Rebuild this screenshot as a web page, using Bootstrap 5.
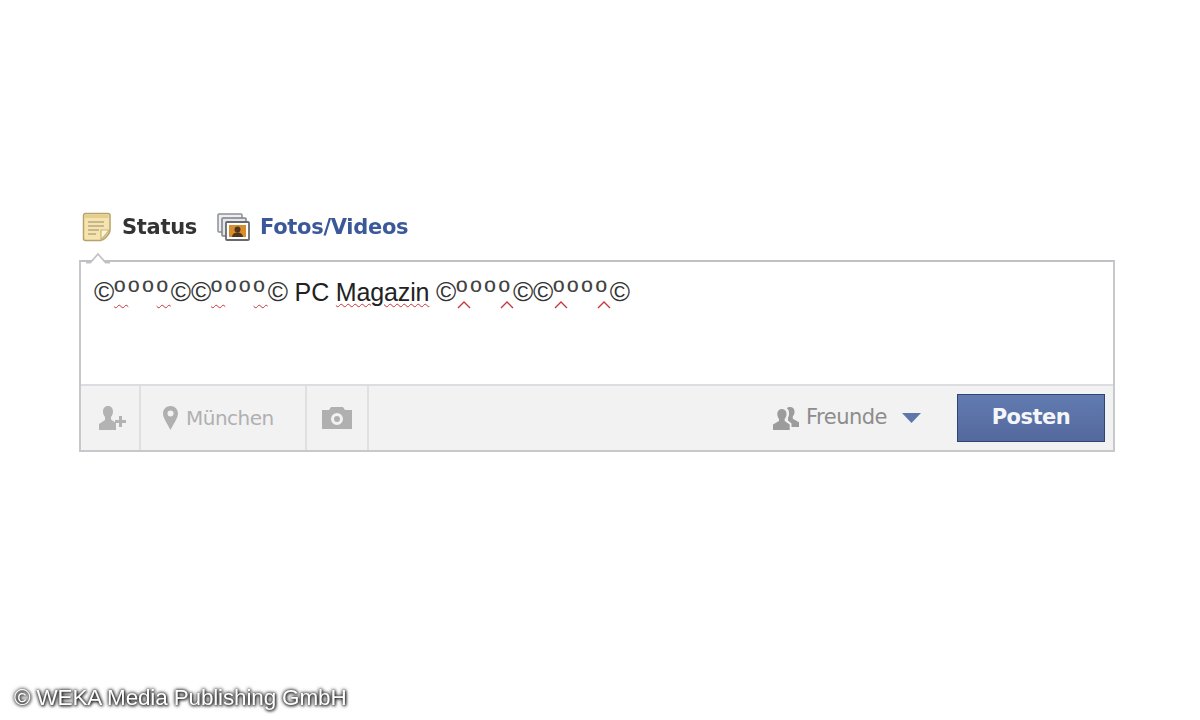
<!DOCTYPE html>
<html lang="de">
<head>
<meta charset="utf-8">
<title>Status</title>
<link href="https://cdn.jsdelivr.net/npm/bootstrap@5.3.0/dist/css/bootstrap.min.css" rel="stylesheet">
<style>
html,body{height:720px;overflow:hidden}
body{background:#fff;font-family:"Liberation Sans",Arial,sans-serif;color:#222}
.stage{padding:210px 85px 0 79px;height:720px;filter:blur(.45px)}
.tabs-row{height:34px;padding-left:3px;gap:20px;margin-bottom:16px}
.tab-item{gap:10px;font-family:"DejaVu Sans",sans-serif;font-weight:700;font-size:21px;letter-spacing:-.3px;line-height:32px}
.tab-status{color:#333}
.tab-photo{color:#3b5998;gap:9px}
.composer{position:relative;border:2px solid #c6c8cc;border-top-color:#bfc1c5;background:#fff;height:192px}
.notch{position:absolute;left:5px;top:-10px}
.msg{height:122px;padding:11px 13px 0;font-size:25px;line-height:36px;color:#222;white-space:nowrap;letter-spacing:-.15px}
.wavy{text-decoration:underline wavy #c8353a 1.4px;text-underline-offset:2px}
.cr{color:#333;font-size:27.5px}
.ord{font-size:30px;font-weight:400;line-height:0;letter-spacing:3.2px;color:#444;position:relative;top:1px}
.ord.wavy{text-underline-offset:2px}
.hat{position:relative;display:inline-block;line-height:36px}
.hat svg{position:absolute;left:1px;top:27px}
.bar{height:66px;background:#f2f2f2;border-top:2px solid #dcdde0;padding-right:8px}
.cell{height:100%;border-right:2px solid #e0e0e0;font-family:"DejaVu Sans",sans-serif;color:#b0b0b0}
.cell-person{width:60px;padding-left:3px}
.cell-place{width:166px;padding-left:21px;gap:7px;font-size:20px;letter-spacing:-.5px}
.cell-cam{width:62px}
.audience{gap:7px;font-family:"DejaVu Sans",sans-serif;font-size:21px;letter-spacing:-.5px;color:#8d8d8d;margin-right:36px}
.post-btn{width:148px;height:48px;background:#5b74a8;background-image:linear-gradient(#617bb0,#54699d);border:1px solid #2f4475;border-radius:0;color:#f4f6fa;font-family:"DejaVu Sans",sans-serif;font-weight:700;font-size:21px;letter-spacing:-.5px;padding:0}
.post-btn:hover{background:#54699d;color:#fff;border-color:#2f4475}
.watermark{position:absolute;left:14px;bottom:9px;font-size:22.5px;line-height:26px;color:#fff;text-shadow:0 0 3px #222,0 0 4px #222,1px 1px 3px #333;white-space:nowrap;letter-spacing:-.15px}
</style>
</head>
<body>
<main class="stage">
  <div class="d-flex align-items-center tabs-row">
    <div class="d-flex align-items-center tab-item tab-status">
      <svg width="30" height="30" viewBox="0 0 30 30"><path d="M3.500 1.500H26a2 2 0 0 1 2 2V18c0 4-6 10.500-10 10.500H3.500a2 2 0 0 1-2-2V3.500a2 2 0 0 1 2-2Z" fill="#f5e4ae" stroke="#b9a269" stroke-width="1.500"/><path d="M3 3H26.500V6H3Z" fill="#e4cf90"/><path d="M6 10H22M6 14H22M6 18H17M6 22H14" stroke="#b7a884" stroke-width="1.600"/><path d="M27.500 18H19V28Z" fill="#fff6d8" stroke="#c9b47d" stroke-width="1.200"/></svg>
      <span>Status</span>
    </div>
    <div class="d-flex align-items-center tab-item tab-photo">
      <svg width="34" height="30" viewBox="0 0 34 30"><rect x="1" y="2" width="24" height="18" rx="1" fill="#eceef1" stroke="#8d9095" stroke-width="1.500"/><rect x="5" y="6" width="24" height="18" rx="1" fill="#e4e6ea" stroke="#7d8085" stroke-width="1.500"/><rect x="9" y="10" width="23" height="18" rx="1" fill="#fff" stroke="#666a70" stroke-width="1.800"/><rect x="12" y="13" width="17" height="12" fill="#d98c2c"/><circle cx="20.500" cy="17.500" r="3" fill="#4f351d"/><path d="M15 25c.5-3.500 3-4.500 5.500-4.500s5 1 5.500 4.500Z" fill="#4f351d"/></svg>
      <span>Fotos/Videos</span>
    </div>
  </div>
  <section class="composer">
    <svg class="notch" width="24" height="12" viewBox="0 0 24 12"><path d="M0 11H4L12 2L20 11H24" fill="#fff" stroke="#c0c2c6" stroke-width="1.800"/><path d="M0 12H24V11.500H0Z" fill="#fff"/></svg>
    <div class="msg"><span class="cr">©</span><span class="wavy ord">º</span><span class="ord">ºº</span><span class="wavy ord">º</span><span class="cr">©©</span><span class="wavy ord">º</span><span class="ord">ºº</span><span class="wavy ord">º</span><span class="cr">©</span> PC <span class="wavy">Magazin</span> <span class="cr">©</span><span class="ord hat">º<svg width="14" height="8" viewBox="0 0 14 8"><path d="M1 7L7 1L13 7" fill="none" stroke="#c8353a" stroke-width="1.300"/></svg></span><span class="ord">ºº</span><span class="ord hat">º<svg width="14" height="8" viewBox="0 0 14 8"><path d="M1 7L7 1L13 7" fill="none" stroke="#c8353a" stroke-width="1.300"/></svg></span><span class="cr">©©</span><span class="ord hat">º<svg width="14" height="8" viewBox="0 0 14 8"><path d="M1 7L7 1L13 7" fill="none" stroke="#c8353a" stroke-width="1.300"/></svg></span><span class="ord">ºº</span><span class="ord hat">º<svg width="14" height="8" viewBox="0 0 14 8"><path d="M1 7L7 1L13 7" fill="none" stroke="#c8353a" stroke-width="1.300"/></svg></span><span class="cr">©</span></div>
    <div class="d-flex align-items-center bar">
      <div class="d-flex align-items-center justify-content-center cell cell-person">
        <svg width="28" height="26" viewBox="0 0 28 26" fill="#b3b3b3"><path d="M10 1c3.500 0 5 2.500 5 5.500 0 2.500-1 4.500-2 5.500v2.500l5 3.500V25H1v-6l6-4v-3C6 11 5 9 5 6.500 5 3.500 6.500 1 10 1Z"/><path d="M21 11h3v4h4v3h-4v4h-3v-4h-4v-3h4Z"/></svg>
      </div>
      <div class="d-flex align-items-center cell cell-place">
        <svg width="17" height="26" viewBox="0 0 17 26"><path fill-rule="evenodd" fill="#b0b0b0" d="M8.500 1C12.800 1 16 4.200 16 8.500 16 13 11.500 19 8.500 25 5.500 19 1 13 1 8.500 1 4.200 4.200 1 8.500 1ZM8.500 5.500a3 3 0 1 0 0 6 3 3 0 0 0 0-6Z"/></svg>
        <span>München</span>
      </div>
      <div class="d-flex align-items-center justify-content-center cell cell-cam">
        <svg width="32" height="24" viewBox="0 0 32 24"><path fill-rule="evenodd" fill="#b0b0b0" d="M10 1H22L24 4H31V23H1V4H8ZM16 7a6 6 0 1 0 0 12 6 6 0 0 0 0-12ZM16 10a3 3 0 1 1 0 6 3 3 0 0 1 0-6Z"/></svg>
      </div>
      <div class="d-flex align-items-center ms-auto audience">
        <svg width="26" height="24" viewBox="0 0 26 24" fill="#9c9c9c"><path d="M9 3c3 0 4.500 2.200 4.500 5 0 2-.8 3.800-1.800 4.800V15l5 3.500V24H0v-5.500l6-3.500v-2.200C5 11.800 4.300 10 4.300 8 4.300 5.200 6 3 9 3Z"/><path d="M17 1c3 0 4.500 2 4.500 4.800 0 2-.8 3.500-1.700 4.500v2.400l6.200 3.500V21h-7.500v-3.500L15 14.500v-3c1-1.200 1.200-3 1-5 0-2-1-3.500-2.200-4.300C14.500 1.500 15.700 1 17 1Z"/></svg>
        <span>Freunde</span>
        <svg class="ms-2" width="19" height="10" viewBox="0 0 19 10"><path d="M0 0H19L9.500 10Z" fill="#5e77a9"/></svg>
      </div>
      <button type="button" class="btn post-btn">Posten</button>
    </div>
  </section>
</main>
<div class="watermark">© WEKA Media Publishing GmbH</div>
<script src="https://cdn.jsdelivr.net/npm/bootstrap@5.3.0/dist/js/bootstrap.bundle.min.js"></script>
</body>
</html>
